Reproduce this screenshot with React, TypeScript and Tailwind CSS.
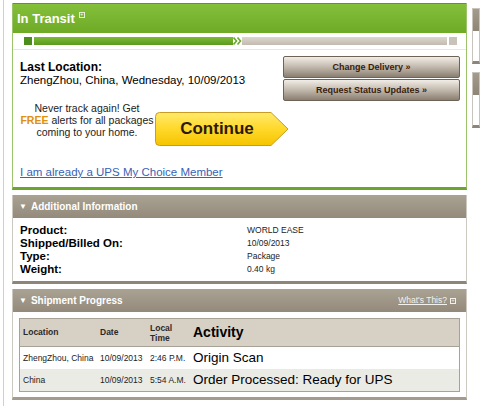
import React from "react";

const FONT = { fontFamily: '"Liberation Sans", Arial, Helvetica, sans-serif' };

function SidePeek() {
  return (
    <div className="flex flex-col gap-[8px] pt-[8px] w-[8px]">
      <div className="h-[56px] border border-[#c9c4bb] border-b-[3px] border-b-[#8d857a] bg-white">
        <div className="h-[22px] bg-gradient-to-b from-[#a49b8d] to-[#8f8576]" />
      </div>
      <div className="h-[56px] border border-[#c9c4bb] border-b-[3px] border-b-[#8d857a] bg-white">
        <div className="h-[22px] bg-gradient-to-b from-[#a49b8d] to-[#8f8576]" />
      </div>
    </div>
  );
}

function BrownButton({ label }: { label: string }) {
  return (
    <button className="w-[177px] h-[22px] rounded-[2px] border border-[#6d6356] bg-gradient-to-b from-[#f1ede7] via-[#c2b9ad] to-[#8a7f71] text-[9px] font-bold text-[#3a1c0c] leading-none">
      {label}
    </button>
  );
}

function ContinueButton() {
  return (
    <div className="relative w-[134px] h-[34px]">
      <svg className="absolute inset-0" width="134" height="34" viewBox="0 0 134 34">
        <defs>
          <linearGradient id="yel" x1="0" y1="0" x2="0" y2="1">
            <stop offset="0" stopColor="#ffea6b" />
            <stop offset="0.5" stopColor="#ffd82a" />
            <stop offset="1" stopColor="#f5c400" />
          </linearGradient>
        </defs>
        <path d="M4.5 0.5 H116 L133 17 L116 33.5 H4.5 Q0.5 33.5 0.5 29.5 V4.5 Q0.5 0.5 4.5 0.5 Z" fill="url(#yel)" stroke="#c89d22" strokeWidth="1" />
      </svg>
      <span className="absolute left-0 top-0 w-[124px] h-[34px] flex items-center justify-center text-[17px] font-bold text-[#2b1a05]">
        Continue
      </span>
    </div>
  );
}

function SectionHeader({ title, right }: { title: string; right?: React.ReactNode }) {
  return (
    <div className="h-[23px] bg-gradient-to-b from-[#aaa293] to-[#938a7b] flex items-center justify-between pl-[6px] pr-[10px]">
      <div className="flex items-center gap-[4px] text-white text-[10px] font-bold">
        <span className="text-[8px]">▼</span>
        <span>{title}</span>
      </div>
      {right}
    </div>
  );
}

export default function App() {
  const rows = [
    { loc: "ZhengZhou, China", date: "10/09/2013", time: "2:46 P.M.", act: "Origin Scan", bg: "bg-white" },
    { loc: "China", date: "10/09/2013", time: "5:54 A.M.", act: "Order Processed: Ready for UPS", bg: "bg-[#ebebe6]" },
  ];

  return (
    <div className="w-[480px] h-[406px] overflow-hidden bg-white flex" style={FONT}>
      <div className="ml-[3px] w-[1px] h-full bg-[#cfcfcf]" />
      <div className="ml-[8px] w-[457px] flex flex-col pt-[3px]">
        {/* In Transit panel */}
        <div className="border-x border-[#9bc46a] border-b-[3px] border-b-[#6ca42e]">
          <div className="h-[30px] bg-gradient-to-b from-[#84c03a] to-[#6eaa25] border-t border-[#5f9a20] flex items-center pl-[4px]">
            <span className="text-white text-[13px] font-bold">In Transit</span>
            <span className="ml-[4px] -mt-[8px] w-[6px] h-[6px] border border-white/80 flex items-center justify-center text-white text-[5px] leading-none">+</span>
          </div>
          <div className="h-[17px] flex items-center pl-[11px] pr-[9px] border-b border-[#e6e6e6]">
            <div className="w-[8px] h-[8px] bg-[#4c8d1c]" />
            <div className="ml-[2px] w-[199px] h-[8px] bg-gradient-to-b from-[#7dba35] to-[#5c9a1e]" />
            <svg width="9" height="8" viewBox="0 0 9 8">
              <path d="M0.5 0.5 L3.5 4 L0.5 7.5 M4.5 0.5 L7.5 4 L4.5 7.5" fill="none" stroke="#6aa92a" strokeWidth="1.6" />
            </svg>
            <div className="flex-1 h-[8px] bg-gradient-to-b from-[#ddd7ce] to-[#c3bbb0]" />
            <div className="ml-[2px] w-[8px] h-[8px] bg-[#c9c2b8]" />
          </div>
          <div className="bg-white pl-[7px] pr-[6px] pt-[6px] pb-[8px]">
            <div className="flex justify-between">
              <div className="pt-[5px] text-[11.5px] leading-[13px] text-black">
                <div className="font-bold text-[12px]">Last Location:</div>
                <div>ZhengZhou, China, Wednesday, 10/09/2013</div>
              </div>
              <div className="flex flex-col gap-[1px]">
                <BrownButton label="Change Delivery »" />
                <BrownButton label="Request Status Updates »" />
              </div>
            </div>
            <div className="flex items-start mt-[1px]">
              <div className="w-[134px] text-center text-[10.5px] leading-[12px] text-[#222] whitespace-nowrap">
                Never track again! Get
                <br />
                <span className="font-bold text-[#e0900e]">FREE</span> alerts for all packages
                <br />
                coming to your home.
              </div>
              <div className="ml-[1px] mt-[10px]">
                <ContinueButton />
              </div>
            </div>
            <div className="mt-[19px] text-[11.5px] leading-[14px] text-[#3a62b5] underline">
              I am already a UPS My Choice Member
            </div>
          </div>
        </div>

        {/* Additional Information */}
        <div className="mt-[5px] border-x border-[#ccc7bf] border-b-[3px] border-b-[#8d857a]">
          <SectionHeader title="Additional Information" />
          <div className="bg-white pl-[7px] pt-[6px] pb-[5px] grid grid-cols-[227px_1fr] items-center">
            {[
              ["Product:", "WORLD EASE"],
              ["Shipped/Billed On:", "10/09/2013"],
              ["Type:", "Package"],
              ["Weight:", "0.40 kg"],
            ].map(([k, v]) => (
              <React.Fragment key={k}>
                <div className="text-[11.5px] font-bold leading-[13px] text-black">{k}</div>
                <div className="text-[8.5px] leading-[13px] text-[#222]">{v}</div>
              </React.Fragment>
            ))}
          </div>
        </div>

        {/* Shipment Progress */}
        <div className="mt-[5px] border-x border-[#ccc7bf] border-b-[3px] border-b-[#a39b90]">
          <SectionHeader
            title="Shipment Progress"
            right={
              <div className="flex items-center gap-[3px] text-[8.5px] text-[#f4f1ec]">
                <span className="underline">What's This?</span>
                <span className="w-[6px] h-[6px] border border-[#f4f1ec] text-[5px] leading-none flex items-center justify-center">+</span>
              </div>
            }
          />
          <div className="bg-white px-[6px] pt-[6px] pb-[5px]">
            <div className="border border-[#a8a196]">
              <div className="h-[28px] bg-[#d7d0c5] grid grid-cols-[77px_50px_43px_1fr] items-center pl-[3px] border-b border-[#a8a196]">
                <span className="text-[8.5px] font-bold text-[#2a2a2a]">Location</span>
                <span className="text-[8.5px] font-bold text-[#2a2a2a]">Date</span>
                <span className="text-[8.5px] font-bold text-[#2a2a2a] leading-[10px]">
                  Local
                  <br />
                  Time
                </span>
                <span className="text-[14px] font-bold text-black">Activity</span>
              </div>
              {rows.map((r) => (
                <div key={r.loc} className={`h-[22px] ${r.bg} grid grid-cols-[77px_50px_43px_1fr] items-center pl-[3px]`}>
                  <span className="text-[8.5px] text-[#222]">{r.loc}</span>
                  <span className="text-[8.5px] text-[#222]">{r.date}</span>
                  <span className="text-[8.5px] text-[#222]">{r.time}</span>
                  <span className="text-[13.5px] text-black">{r.act}</span>
                </div>
              ))}
            </div>
          </div>
        </div>
      </div>
      <div className="ml-[5px]">
        <SidePeek />
      </div>
    </div>
  );
}
